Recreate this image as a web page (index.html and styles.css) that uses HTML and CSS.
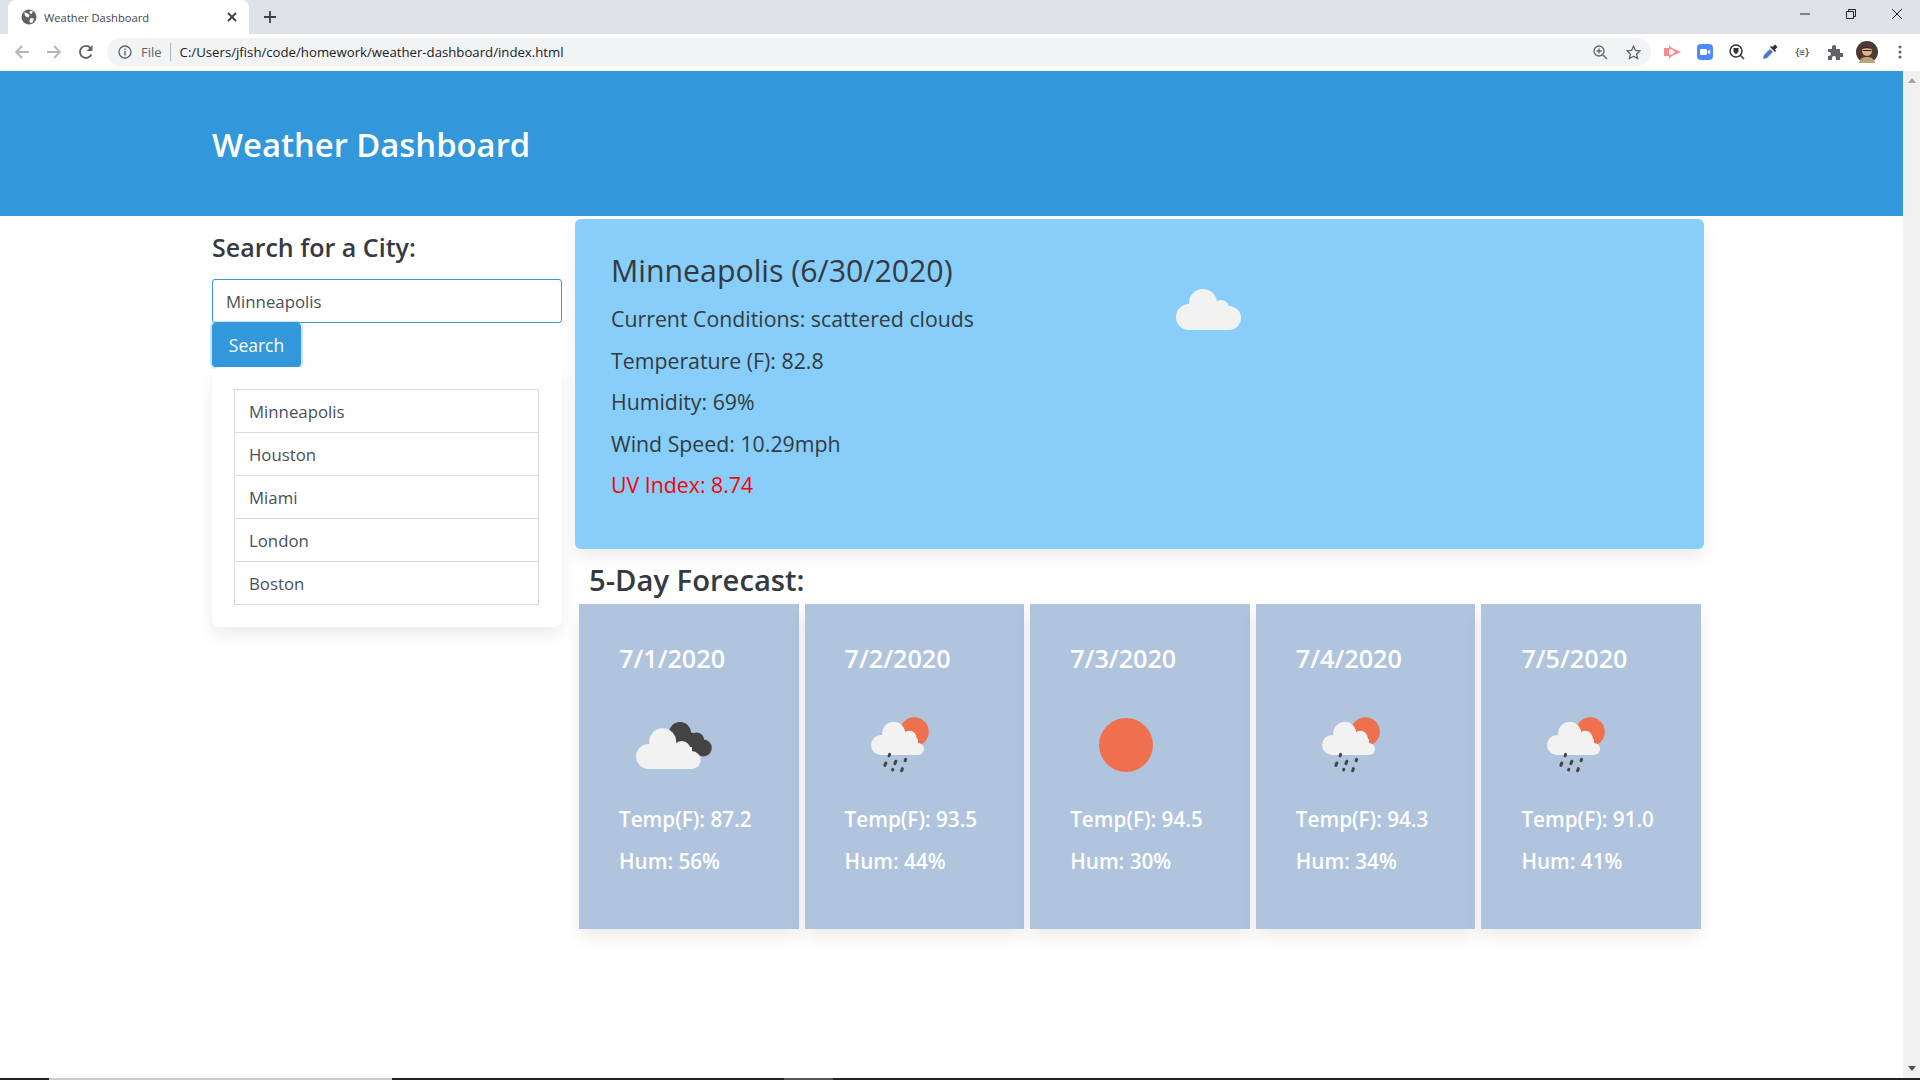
FILE: index.html
```html
<!DOCTYPE html>
<html lang="en">
<head>
<meta charset="UTF-8" />
<meta name="viewport" content="width=device-width, initial-scale=1" />
<title>Weather Dashboard</title>
<link rel="stylesheet" href="styles.css">
</head>
<body>

<svg class="defs" width="0" height="0">
  <defs>
    <g id="rainIcon">
      <circle cx="69.3" cy="42.7" r="14.5" fill="#ef704d" />
      <g fill="#f2f2f2">
        <circle cx="48.7" cy="44.3" r="11.5" />
        <circle cx="36" cy="56" r="10" />
        <circle cx="64.3" cy="49.3" r="7.5" />
        <circle cx="73" cy="60" r="6" />
        <rect x="36" y="50" width="37" height="16" />
      </g>
      <g stroke="#444" stroke-width="3" stroke-linecap="round">
        <path d="M44.6 65.4l-.5 1.4" />
        <path d="M40.8 74l-.9 2.4" />
        <path d="M50.8 72.2l-.9 2.4" />
        <path d="M60.6 70.4l-.5 1.2" />
        <path d="M47.8 80.4l-.2 .6" />
        <path d="M57.4 79.6l-.8 2.2" />
      </g>
    </g>
  </defs>
</svg>

<div class="tabBar">
  <div class="tab">
    <svg class="favicon" width="16" height="16" viewBox="0 0 16 16">
      <circle cx="8" cy="8" r="7.5" fill="#5f6368" />
      <path d="M3 3.5l3 .5 2.5 2-1 2.5-2-.5-1.5-1.5zM9 1.5l3 1-1.5 2.5-2-1zM9.5 9l3.500 .5-1.500 4-2.500 .5-.5-2.500z" fill="#fff" />
    </svg>
    <span class="tabTitle">Weather Dashboard</span>
    <svg class="tabClose" width="10" height="10" viewBox="0 0 10 10">
      <path d="M1 1l8 8M9 1l-8 8" stroke="#3c4043" stroke-width="1.800" />
    </svg>
  </div>
  <svg class="newTab" width="12" height="12" viewBox="0 0 12 12">
    <path d="M6 0v12M0 6h12" stroke="#3c4043" stroke-width="1.800" />
  </svg>
  <div class="windowBtns">
    <svg width="10" height="10" viewBox="0 0 10 10"><path d="M0 5h10" stroke="#222" /></svg>
    <svg width="10" height="10" viewBox="0 0 10 10"><path d="M.5 2.500h7v7h-7zM2.500 2.500v-2h7v7h-2" fill="none" stroke="#222" /></svg>
    <svg width="10" height="10" viewBox="0 0 10 10"><path d="M0 0l10 10M10 0l-10 10" stroke="#222" /></svg>
  </div>
</div>

<div class="toolBar">
  <svg class="navIcon" width="16" height="16" viewBox="0 0 16 16">
    <path d="M15 8H2M8 2L2 8l6 6" fill="none" stroke="#b4b6b9" stroke-width="1.800" />
  </svg>
  <svg class="navIcon" width="16" height="16" viewBox="0 0 16 16">
    <path d="M1 8h13M8 2l6 6-6 6" fill="none" stroke="#b4b6b9" stroke-width="1.800" />
  </svg>
  <svg class="navIcon" width="16" height="16" viewBox="0 0 16 16">
    <path d="M13.400 10.500A6 6 0 1 1 12.300 3.800" fill="none" stroke="#5f6368" stroke-width="1.800" />
    <path d="M14.500 1v6h-6z" fill="#5f6368" />
  </svg>
  <div class="urlBar">
    <svg width="14" height="14" viewBox="0 0 14 14">
      <circle cx="7" cy="7" r="6" fill="none" stroke="#5f6368" stroke-width="1.300" />
      <path d="M7 6v4.500M7 3.500v1.500" stroke="#5f6368" stroke-width="1.400" />
    </svg>
    <span class="urlFile">File</span>
    <span class="urlText">C:/Users/jfish/code/homework/weather-dashboard/index.html</span>
    <svg class="urlZoom" width="15" height="15" viewBox="0 0 15 15">
      <circle cx="6" cy="6" r="5" fill="none" stroke="#5f6368" stroke-width="1.300" />
      <path d="M9.700 9.700L14 14M6 3.500v5M3.500 6h5" stroke="#5f6368" stroke-width="1.300" />
    </svg>
    <svg width="15" height="15" viewBox="0 0 15 15">
      <path d="M7.500 1.200l1.900 4.200 4.600 .5-3.400 3.100 .9 4.500-4-2.300-4 2.300 .9-4.500L1 5.900l4.600-.5z" fill="none" stroke="#5f6368" stroke-width="1.300" />
    </svg>
  </div>
  <div class="extensions">
    <svg width="17" height="14" viewBox="0 0 17 14">
      <path d="M0 3h5V0l3 3 9 4-9 4-3 3v-3H0z" fill="#fb8a91" />
      <path d="M5 4.500h3l3 2.500-3 2.500H5z" fill="#fff" />
    </svg>
    <svg width="16" height="16" viewBox="0 0 16 16">
      <rect width="16" height="16" rx="4" fill="#4a8cff" />
      <rect x="3" y="5" width="7" height="6" rx="1.200" fill="#fff" />
      <path d="M10.800 7.200l2.400-1.700v5l-2.400-1.700z" fill="#fff" />
    </svg>
    <svg width="16" height="16" viewBox="0 0 16 16">
      <circle cx="7" cy="7" r="6" fill="none" stroke="#333" stroke-width="1.500" />
      <path d="M11 11l4 4" stroke="#333" stroke-width="1.500" />
      <path d="M4.500 4h5v3.500L7 10.500 4.500 7.500z" fill="#333" />
    </svg>
    <svg width="16" height="16" viewBox="0 0 16 16">
      <path d="M1 15l1-4 6-6 3 3-6 6z" fill="#4a76c9" />
      <path d="M8 3l5 5 1-1-1-1.500L15.500 3 13 .5 10.500 3 9 2z" fill="#333" />
    </svg>
    <span class="extBraces">{≡}</span>
    <svg width="16" height="16" viewBox="0 0 16 16">
      <path d="M1 5h4V3a2 2 0 0 1 4 0v2h4v4h2a2 2 0 0 1 0 4h-2v3H9v-2a2 2 0 0 0-4 0v2H1v-4h1a2 2 0 0 0 0-4H1z" fill="#5f6368" />
    </svg>
    <svg width="22" height="22" viewBox="0 0 22 22">
      <circle cx="11" cy="11" r="11" fill="#4b3a33" />
      <path d="M3 22c1-5 4-6 8-6s7 1 8 6z" fill="#b9a27a" />
      <circle cx="11" cy="10" r="5" fill="#e2b08f" />
      <path d="M6 8c1-4 9-4 10 0-3-1-7-1-10 0z" fill="#3a2a22" />
      <path d="M6.500 9.500h9" stroke="#222" />
    </svg>
    <svg width="4" height="14" viewBox="0 0 4 14">
      <circle cx="2" cy="2" r="1.500" fill="#5f6368" />
      <circle cx="2" cy="7" r="1.500" fill="#5f6368" />
      <circle cx="2" cy="12" r="1.500" fill="#5f6368" />
    </svg>
  </div>
</div>

<div class="window">
  <div class="page">
    <header class="hero">
      <h1>Weather Dashboard</h1>
    </header>

    <div class="content">
      <div class="sidebar">
        <h4>Search for a City:</h4>
        <input type="text" class="cityInput" value="Minneapolis" />
        <button class="searchBtn">Search</button>
        <div class="historyCard">
          <ul class="historyList">
            <li>Minneapolis</li>
            <li>Houston</li>
            <li>Miami</li>
            <li>London</li>
            <li>Boston</li>
          </ul>
        </div>
      </div>

      <div class="main">
        <div class="current">
          <div class="currentText">
            <h2>Minneapolis (6/30/2020)</h2>
            <p>Current Conditions: scattered clouds</p>
            <p>Temperature (F): 82.8</p>
            <p>Humidity: 69%</p>
            <p>Wind Speed: 10.29mph</p>
            <p class="uvHigh">UV Index: 8.74</p>
          </div>
          <svg class="currentIcon" width="65" height="41" viewBox="0 0 65 41">
            <g fill="#f2f2f2">
              <circle cx="13" cy="28" r="13" />
              <circle cx="27" cy="14" r="14" />
              <circle cx="45" cy="19" r="8" />
              <circle cx="53" cy="29" r="12" />
              <rect x="13" y="20" width="40" height="21" />
            </g>
          </svg>
        </div>

        <h3>5-Day Forecast:</h3>
        <div class="forecast">
          <div class="dayCard">
            <h5>7/1/2020</h5>
            <svg class="dayIcon" width="112" height="112" viewBox="0 0 112 112">
              <g fill="#444">
                <circle cx="61" cy="44" r="11" />
                <circle cx="77.700" cy="51" r="7.500" />
                <circle cx="84.300" cy="59" r="8.500" />
                <path d="M61 38l17 8 6 20H60z" />
              </g>
              <g fill="#f2f2f2">
                <circle cx="43.700" cy="52.700" r="13.500" />
                <circle cx="29.500" cy="67.500" r="12.500" />
                <circle cx="62.700" cy="61" r="9" />
                <circle cx="72.700" cy="71" r="9" />
                <rect x="29" y="58" width="44" height="22" />
              </g>
            </svg>
            <p>Temp(F): 87.2</p>
            <p>Hum: 56%</p>
          </div>
          <div class="dayCard">
            <h5>7/2/2020</h5>
            <svg class="dayIcon" width="112" height="112" viewBox="0 0 112 112"><use href="#rainIcon" /></svg>
            <p>Temp(F): 93.5</p>
            <p>Hum: 44%</p>
          </div>
          <div class="dayCard">
            <h5>7/3/2020</h5>
            <svg class="dayIcon" width="112" height="112" viewBox="0 0 112 112">
              <circle cx="56" cy="56" r="27" fill="#ef704d" />
            </svg>
            <p>Temp(F): 94.5</p>
            <p>Hum: 30%</p>
          </div>
          <div class="dayCard">
            <h5>7/4/2020</h5>
            <svg class="dayIcon" width="112" height="112" viewBox="0 0 112 112"><use href="#rainIcon" /></svg>
            <p>Temp(F): 94.3</p>
            <p>Hum: 34%</p>
          </div>
          <div class="dayCard">
            <h5>7/5/2020</h5>
            <svg class="dayIcon" width="112" height="112" viewBox="0 0 112 112"><use href="#rainIcon" /></svg>
            <p>Temp(F): 91.0</p>
            <p>Hum: 41%</p>
          </div>
        </div>
      </div>
    </div>
  </div>

  <div class="scrollbar">
    <span class="arrowUp"></span>
    <span class="arrowDown"></span>
  </div>
</div>

<div class="taskStrip">
  <span class="stripActive"></span>
  <span class="stripHover"></span>
</div>

</body>
</html>
```

FILE: styles.css
```css
* {
  box-sizing: border-box;
}
html, body {
  height: 100%;
}
body {
  margin: 0;
  display: flex;
  flex-direction: column;
  overflow: hidden;
  font-family: "Open Sans", "Noto Sans", sans-serif;
  color: #343a40;
  background: #fff;
}
.defs {
  position: absolute;
}

/* browser chrome */
.tabBar {
  height: 34px;
  flex: none;
  display: flex;
  align-items: center;
  background: #dee1e6;
  padding-left: 8px;
}
.tab {
  width: 241px;
  height: 34px;
  display: flex;
  align-items: center;
  padding: 0 13px;
  background: #fff;
  border-radius: 8px 8px 0 0;
  font-size: 11.2px;
  color: #45474b;
}
.tabTitle {
  margin-left: 7px;
}
.tabClose {
  margin-left: auto;
  margin-right: -1px;
}
.newTab {
  margin-left: 15px;
}
.windowBtns {
  margin-left: auto;
  margin-right: 18px;
  margin-top: -6px;
  display: flex;
  gap: 36px;
}
.toolBar {
  height: 37px;
  flex: none;
  display: flex;
  align-items: center;
  padding: 0 0 1px 14px;
  background: #fff;
  font-size: 13px;
}
.navIcon {
  margin-right: 16px;
}
.urlBar {
  width: 1544px;
  height: 28px;
  margin-left: -3px;
  padding: 0 10px 0 11px;
  display: flex;
  align-items: center;
  background: #f1f3f4;
  border-radius: 14px;
}
.urlFile {
  margin-left: 9px;
  padding-right: 8px;
  border-right: 1px solid #b0b3b8;
  color: #5f6368;
  line-height: 18px;
}
.urlText {
  margin-left: 9px;
  font-size: 13.2px;
  color: #202124;
}
.urlZoom {
  margin-left: auto;
  margin-right: 18px;
}
.extensions {
  margin-left: 5px;
  display: grid;
  grid-template-columns: repeat(8, 32.5px);
  justify-items: center;
  align-items: center;
}
.extBraces {
  font-size: 10px;
  font-weight: 600;
  color: #444;
}

/* page */
.window {
  flex: 1;
  min-height: 0;
  display: flex;
}
.page {
  flex: 1;
  min-width: 0;
}
.scrollbar {
  width: 17px;
  display: flex;
  flex-direction: column;
  justify-content: space-between;
  align-items: center;
  padding: 7px 0;
  background: #f1f1f1;
}
.arrowUp {
  border: 4px solid transparent;
  border-top: 0;
  border-bottom: 5px solid #a3a3a3;
}
.arrowDown {
  border: 4px solid transparent;
  border-bottom: 0;
  border-top: 5px solid #505050;
}
.taskStrip {
  height: 2px;
  flex: none;
  display: flex;
  padding-left: 49px;
  background: #222;
}
.stripActive {
  width: 343px;
  background: #ccc;
}
.stripHover {
  width: 49px;
  margin-left: 392px;
  background: #555;
}
.hero {
  height: 145px;
  padding: 0 0 0 212px;
  display: flex;
  align-items: center;
  background: #3297db;
}
.hero h1 {
  margin: 2px 0 0;
  font-size: 32.8px;
  font-weight: 600;
  color: #fff;
}
.content {
  display: flex;
  gap: 13px;
  padding-left: 212px;
}
.sidebar {
  width: 350px;
}
.sidebar h4 {
  margin: 14px 0 15px;
  font-size: 25px;
  line-height: 34px;
  font-weight: 600;
}
.cityInput {
  display: block;
  width: 100%;
  height: 44px;
  padding: 0 13px;
  font-family: inherit;
  font-size: 16.8px;
  color: #495057;
  border: 1px solid #3297db;
  border-radius: 3px;
  outline: none;
}
.searchBtn {
  display: block;
  width: 89px;
  height: 44px;
  font-family: inherit;
  font-size: 17.5px;
  color: #fff;
  border: none;
  background: #3297db;
  border-radius: 4px;
  box-shadow: 0 0 0 2px rgba(52, 152, 219, 0.25);
}
.historyCard {
  padding: 22px 23px 22px 22px;
  border-radius: 8px;
  background: #fff;
  box-shadow: 0 8px 16px rgba(0, 0, 0, 0.08);
}
.historyList {
  list-style-type: none;
  margin: 0;
  padding: 0;
  border: 1px solid #d9d9d9;
}
.historyList li {
  height: 43px;
  padding: 0 14px;
  display: flex;
  align-items: center;
  font-size: 16.8px;
  color: #495057;
  border-top: 1px solid #d9d9d9;
}
.historyList li:first-child {
  height: 42px;
  border-top: none;
}
.main {
  width: 1129px;
  padding-top: 3px;
}
.current {
  height: 330px;
  padding: 31px 36px;
  display: flex;
  align-items: flex-start;
  background: #87cefa;
  border-radius: 6px;
  box-shadow: 0 8px 16px rgba(0, 0, 0, 0.08);
}
.currentText {
  width: 565px;
}
.currentText h2 {
  margin: 0 0 6px;
  font-size: 30.3px;
  line-height: 42px;
  font-weight: 500;
}
.currentText p {
  margin: 0;
  font-size: 21.3px;
  line-height: 41.600px;
  font-weight: 500;
}
.currentText .uvHigh {
  color: #ff0000;
}
.currentIcon {
  margin-top: 39px;
}
.main h3 {
  margin: 12px 0 5px 14px;
  font-size: 29.2px;
  line-height: 38px;
  font-weight: 600;
}
.forecast {
  width: 1122px;
  margin-left: 4px;
  display: flex;
  gap: 6px;
}
.dayCard {
  flex: 1;
  height: 325px;
  padding: 36px 0 0 40px;
  color: #fff;
  background: #b0c4de;
  box-shadow: 0 8px 16px rgba(0, 0, 0, 0.08);
}
.dayCard h5 {
  margin: 0;
  font-size: 25.2px;
  line-height: 36px;
  font-weight: 600;
}
.dayIcon {
  display: block;
  margin: 13px 0 -2px;
}
.dayCard p {
  margin: 0;
  font-size: 20.7px;
  line-height: 41.600px;
  font-weight: 600;
}
```
